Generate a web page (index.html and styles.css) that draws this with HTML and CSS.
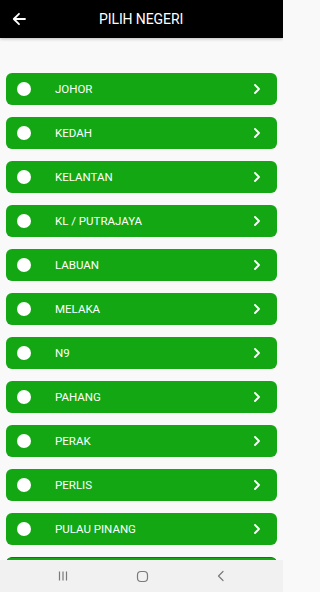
FILE: index.html
```html
<!DOCTYPE html>
<html lang="ms">
<head>
<meta charset="utf-8">
<title>Pilih Negeri</title>
<link rel="stylesheet" href="styles.css">
</head>
<body>
<div class="screen">
  <header class="topbar">
    <svg class="back" width="14" height="14" viewBox="0 0 14 14" aria-hidden="true">
      <path d="M13 7H2M7 1.8L1.8 7 7 12.2" fill="none" stroke="#fff" stroke-width="1.8" stroke-linecap="round" stroke-linejoin="round"/>
    </svg>
    <h1 class="title">PILIH NEGERI</h1>
  </header>
  <main class="list">
    <div class="row"><span class="dot"></span><span class="name">JOHOR</span><svg class="chev" width="8" height="12" viewBox="0 0 8 12"><path d="M2 2l4 4-4 4" fill="none" stroke="#fff" stroke-width="1.8" stroke-linecap="round" stroke-linejoin="round"/></svg></div>
    <div class="row"><span class="dot"></span><span class="name">KEDAH</span><svg class="chev" width="8" height="12" viewBox="0 0 8 12"><path d="M2 2l4 4-4 4" fill="none" stroke="#fff" stroke-width="1.8" stroke-linecap="round" stroke-linejoin="round"/></svg></div>
    <div class="row"><span class="dot"></span><span class="name">KELANTAN</span><svg class="chev" width="8" height="12" viewBox="0 0 8 12"><path d="M2 2l4 4-4 4" fill="none" stroke="#fff" stroke-width="1.8" stroke-linecap="round" stroke-linejoin="round"/></svg></div>
    <div class="row"><span class="dot"></span><span class="name">KL / PUTRAJAYA</span><svg class="chev" width="8" height="12" viewBox="0 0 8 12"><path d="M2 2l4 4-4 4" fill="none" stroke="#fff" stroke-width="1.8" stroke-linecap="round" stroke-linejoin="round"/></svg></div>
    <div class="row"><span class="dot"></span><span class="name">LABUAN</span><svg class="chev" width="8" height="12" viewBox="0 0 8 12"><path d="M2 2l4 4-4 4" fill="none" stroke="#fff" stroke-width="1.8" stroke-linecap="round" stroke-linejoin="round"/></svg></div>
    <div class="row"><span class="dot"></span><span class="name">MELAKA</span><svg class="chev" width="8" height="12" viewBox="0 0 8 12"><path d="M2 2l4 4-4 4" fill="none" stroke="#fff" stroke-width="1.8" stroke-linecap="round" stroke-linejoin="round"/></svg></div>
    <div class="row"><span class="dot"></span><span class="name">N9</span><svg class="chev" width="8" height="12" viewBox="0 0 8 12"><path d="M2 2l4 4-4 4" fill="none" stroke="#fff" stroke-width="1.8" stroke-linecap="round" stroke-linejoin="round"/></svg></div>
    <div class="row"><span class="dot"></span><span class="name">PAHANG</span><svg class="chev" width="8" height="12" viewBox="0 0 8 12"><path d="M2 2l4 4-4 4" fill="none" stroke="#fff" stroke-width="1.8" stroke-linecap="round" stroke-linejoin="round"/></svg></div>
    <div class="row"><span class="dot"></span><span class="name">PERAK</span><svg class="chev" width="8" height="12" viewBox="0 0 8 12"><path d="M2 2l4 4-4 4" fill="none" stroke="#fff" stroke-width="1.8" stroke-linecap="round" stroke-linejoin="round"/></svg></div>
    <div class="row"><span class="dot"></span><span class="name">PERLIS</span><svg class="chev" width="8" height="12" viewBox="0 0 8 12"><path d="M2 2l4 4-4 4" fill="none" stroke="#fff" stroke-width="1.8" stroke-linecap="round" stroke-linejoin="round"/></svg></div>
    <div class="row"><span class="dot"></span><span class="name">PULAU PINANG</span><svg class="chev" width="8" height="12" viewBox="0 0 8 12"><path d="M2 2l4 4-4 4" fill="none" stroke="#fff" stroke-width="1.8" stroke-linecap="round" stroke-linejoin="round"/></svg></div>
    <div class="row row-peek"></div>
  </main>
  <nav class="navbar">
    <svg width="12" height="12" viewBox="0 0 12 12"><path d="M2.5 1.5v9M6 1.5v9M9.5 1.5v9" stroke="#7a7a7a" stroke-width="1.2"/></svg>
    <svg width="13" height="13" viewBox="0 0 13 13"><rect x="1.5" y="1.5" width="10" height="10" rx="3.5" fill="none" stroke="#7a7a7a" stroke-width="1.2"/></svg>
    <svg width="12" height="12" viewBox="0 0 12 12"><path d="M8 1.5L3.5 6 8 10.5" fill="none" stroke="#7a7a7a" stroke-width="1.2" stroke-linecap="round" stroke-linejoin="round"/></svg>
  </nav>
</div>
</body>
</html>
```
FILE: styles.css
```css
* { box-sizing: border-box; }
html, body { margin: 0; padding: 0; background: #f9f9f9; }
body {
  font-family: Roboto, "Noto Sans", "Liberation Sans", sans-serif;
}
.screen {
  width: 283px;
  height: 592px;
  display: flex;
  flex-direction: column;
  overflow: hidden;
}
.topbar {
  height: 38px;
  flex: 0 0 38px;
  background: #000;
  display: flex;
  align-items: center;
  padding-left: 12px;
  box-shadow: 0 1px 3px rgba(0,0,0,0.25);
  position: relative;
  z-index: 1;
}
.back { flex: 0 0 14px; }
.title {
  margin: 0 0 0 73px;
  color: #fff;
  font-size: 14px;
  font-weight: 400;
  letter-spacing: -0.1px;
}
.list {
  flex: 1 1 auto;
  overflow: hidden;
  padding: 35px 6px 0 6px;
  display: flex;
  flex-direction: column;
  gap: 12px;
}
.row {
  flex: 0 0 32px;
  height: 32px;
  background: #13a813;
  border-radius: 6px;
  display: flex;
  align-items: center;
  padding: 0 16px 0 11px;
}
.row-peek { border-top: 1px solid #0c7a0c; }
.dot {
  width: 14px;
  height: 14px;
  border-radius: 50%;
  background: #fff;
  flex: 0 0 14px;
}
.name {
  flex: 1 1 auto;
  margin-left: 24px;
  color: #fff;
  font-size: 11.5px;
  letter-spacing: 0;
}
.chev { flex: 0 0 8px; }
.navbar {
  flex: 0 0 32px;
  height: 32px;
  background: #f1f1f1;
  display: flex;
  align-items: center;
  justify-content: space-between;
  padding: 0 56px 0 57px;
}
```
